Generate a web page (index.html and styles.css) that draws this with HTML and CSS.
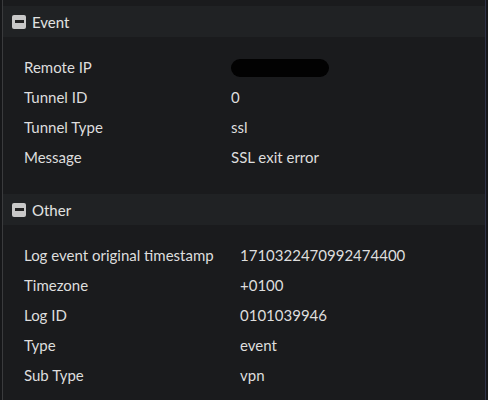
FILE: index.html
```html
<!DOCTYPE html>
<html>
<head>
<meta charset="utf-8">
<link rel="stylesheet" href="styles.css">
</head>
<body>
<div class="panel">
  <div class="section">
    <div class="section-head"><span class="toggle"></span><span class="title">Event</span></div>
    <div class="rows rows-event">
      <div class="row"><span class="label">Remote IP</span><span class="value"><span class="redact"></span></span></div>
      <div class="row"><span class="label">Tunnel ID</span><span class="value">0</span></div>
      <div class="row"><span class="label">Tunnel Type</span><span class="value">ssl</span></div>
      <div class="row"><span class="label">Message</span><span class="value">SSL exit error</span></div>
    </div>
  </div>
  <div class="section">
    <div class="section-head"><span class="toggle"></span><span class="title">Other</span></div>
    <div class="rows rows-other">
      <div class="row"><span class="label">Log event original timestamp</span><span class="value">1710322470992474400</span></div>
      <div class="row"><span class="label">Timezone</span><span class="value">+0100</span></div>
      <div class="row"><span class="label">Log ID</span><span class="value">0101039946</span></div>
      <div class="row"><span class="label">Type</span><span class="value">event</span></div>
      <div class="row"><span class="label">Sub Type</span><span class="value">vpn</span></div>
    </div>
  </div>
</div>
</body>
</html>
```
FILE: styles.css
```css
html, body {
  margin: 0;
  padding: 0;
  background: #161719;
}
body {
  width: 488px;
  height: 400px;
  overflow: hidden;
  font-family: Lato, "Open Sans", sans-serif;
  font-size: 15px;
  color: #dcdcdc;
}
.panel {
  margin-left: 2px;
  width: 484px;
  height: 400px;
  border-left: 1px solid #3a3b3d;
  border-right: 1px solid #2e3147;
  background: #1a1b1d;
  padding-top: 6px;
  box-sizing: border-box;
}
.section-head {
  height: 31px;
  display: flex;
  align-items: center;
  background: #202224;
  padding-left: 9px;
}
.toggle {
  width: 14px;
  height: 14px;
  border-radius: 2px;
  background: #c8c8c8;
  display: flex;
  align-items: center;
  justify-content: center;
  margin-right: 6px;
}
.toggle::before {
  content: "";
  width: 9px;
  height: 3px;
  background: #222;
}
.title {
  color: #e2e2e2;
}
.rows {
  padding: 15px 0 22px 21px;
}
.row {
  height: 30px;
  display: grid;
  align-items: center;
}
.rows-event .row {
  grid-template-columns: 207px 1fr;
}
.rows-other .row {
  grid-template-columns: 216px 1fr;
}
.label, .value {
  color: #dedede;
  white-space: nowrap;
}
.redact {
  display: inline-block;
  width: 98px;
  height: 18px;
  border-radius: 9px;
  background: #020202;
  vertical-align: middle;
}
```
